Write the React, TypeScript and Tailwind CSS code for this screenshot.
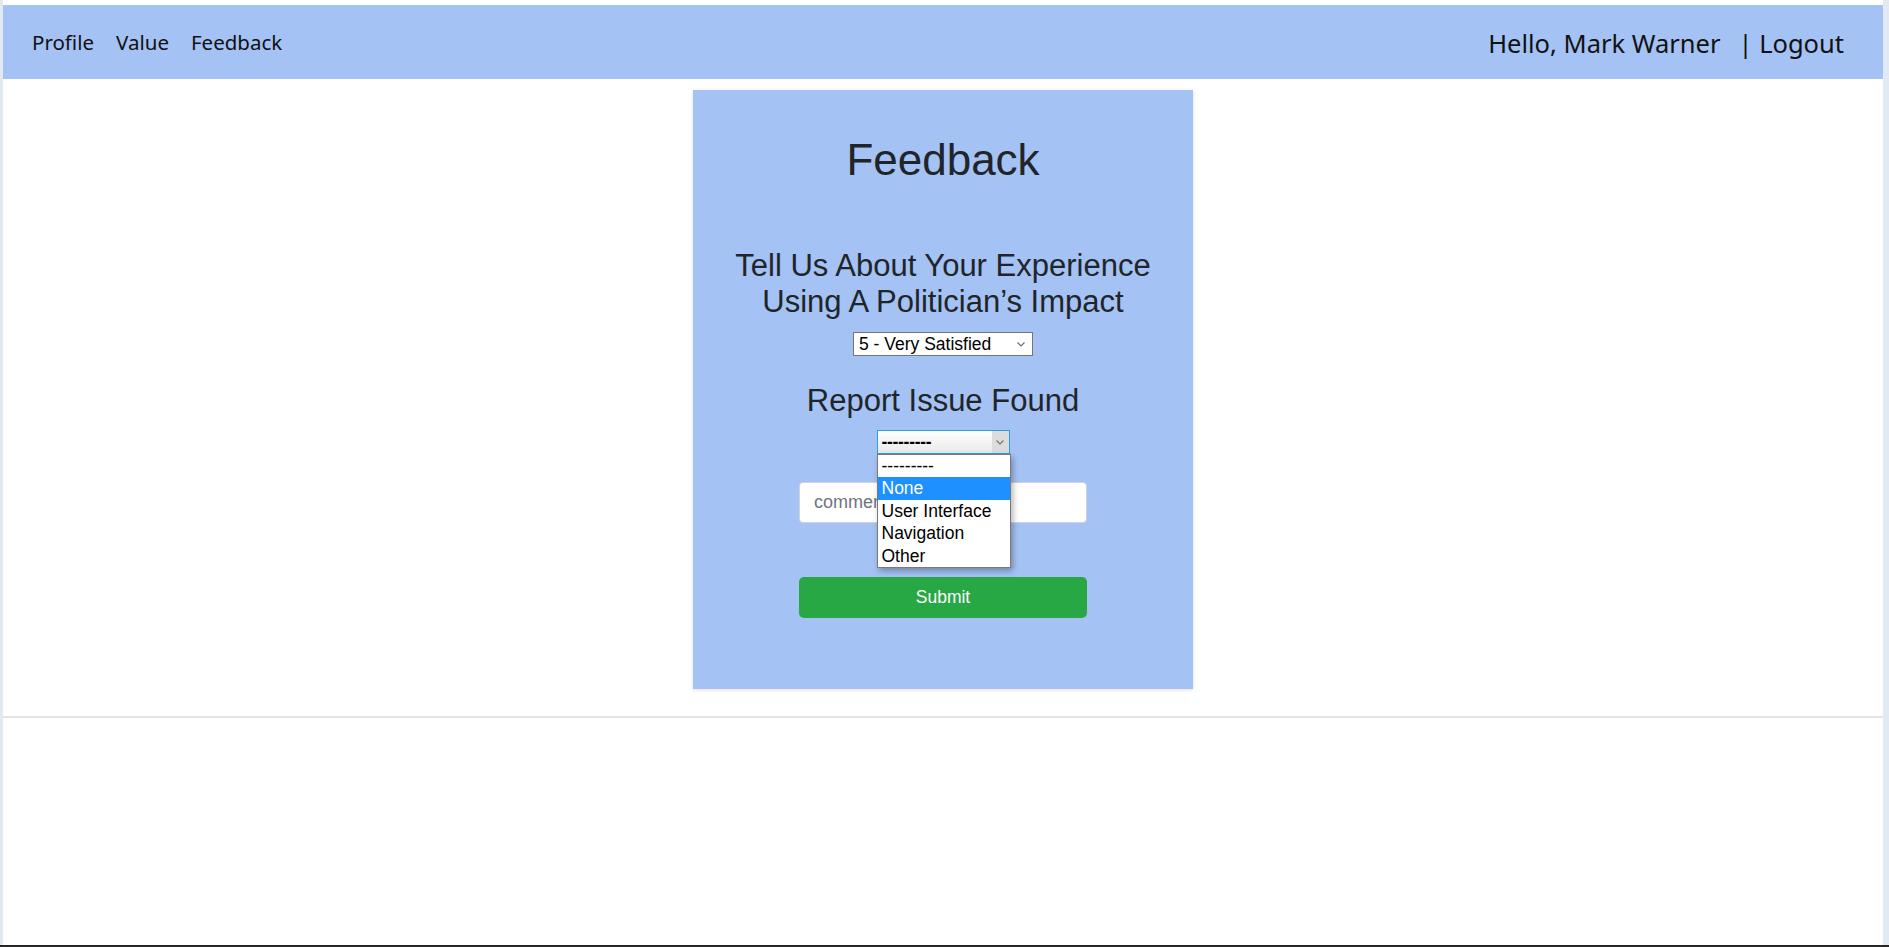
import React from "react";

function Chevron({ className }: { className?: string }) {
  return (
    <svg className={className} width="8" height="5" viewBox="0 0 8 5" fill="none">
      <path d="M0.5 0.5L4 4L7.5 0.5" stroke="currentColor" strokeWidth="1.1" />
    </svg>
  );
}

function Navbar() {
  return (
    <nav className="flex h-[74px] items-center justify-between bg-[#a4c2f4] pl-[29px] pr-[39px] font-['Noto_Sans',sans-serif] text-[#111]">
      <div className="flex items-center gap-[22px] text-[20.5px]">
        <a href="#">Profile</a>
        <a href="#">Value</a>
        <a href="#">Feedback</a>
      </div>
      <div className="flex items-center pt-[3px] text-[25.5px]">
        <span>Hello, Mark Warner</span>
        <a href="#" className="ml-[18px]">
          | Logout
        </a>
      </div>
    </nav>
  );
}

const issueOptions = ["---------", "None", "User Interface", "Navigation", "Other"];

function IssueSelect() {
  return (
    <div className="relative z-10 mt-[11px]">
      <div className="flex h-[24px] w-[133px] items-stretch border border-[#2f9ed9] bg-gradient-to-b from-white to-[#e9e9e9] text-[17.5px] leading-none text-black">
        <span className="flex flex-1 items-center pl-[4px] pt-[1px] font-semibold tracking-[-0.3px]">---------</span>
        <span className="flex w-[17px] items-center justify-center bg-[#dcdcdc] text-[#6f6f6f]">
          <Chevron />
        </span>
      </div>
      <ul className="absolute left-0 top-full w-[134px] border border-[#7a7a7a] bg-white text-[17.5px] text-black shadow-[2px_3px_6px_rgba(0,0,0,0.3)]">
        {issueOptions.map((opt) => (
          <li
            key={opt}
            className={
              opt === "None"
                ? "bg-[#1e90ff] pl-[4px] leading-[22.4px] text-white"
                : "pl-[4px] leading-[22.4px]"
            }
          >
            {opt}
          </li>
        ))}
      </ul>
    </div>
  );
}

function FeedbackCard() {
  return (
    <div className="flex h-[599px] w-[500px] flex-col items-center bg-[#a4c2f4] pt-[45px] text-[#212529] shadow-[0_1px_4px_rgba(0,0,0,0.12)]">
      <h1 className="text-[44px] leading-[50px]">Feedback</h1>
      <h3 className="mt-[63px] text-center text-[31px] leading-[36px]">
        Tell Us About Your Experience
        <br />
        Using A Politician’s Impact
      </h3>
      <div className="mt-[12px] flex h-[24px] w-[180px] items-center justify-between border border-[#767676] bg-white pl-[5px] pr-[7px] pt-[1px] text-[17.5px] leading-none text-black">
        <span>5 - Very Satisfied</span>
        <Chevron className="text-[#6b6b6b]" />
      </div>
      <h3 className="mt-[27px] text-[31px] leading-[36px]">Report Issue Found</h3>
      <IssueSelect />
      <input
        placeholder="comments"
        className="mt-[28px] h-[41px] w-[288px] rounded-[4px] border border-[#ced4da] bg-white px-[14px] text-[18px] text-[#495057] outline-none placeholder:text-[#6c757d]"
      />
      <button className="mt-[54px] h-[41px] w-[288px] rounded-[5px] bg-[#28a745] text-[17.5px] text-white">
        Submit
      </button>
    </div>
  );
}

export default function App() {
  return (
    <div className="flex h-[947px] w-full flex-col bg-[#e1e9f3] font-['Liberation_Sans',Arial,sans-serif]">
      <div className="flex flex-1 flex-col pl-[3px] pr-[6px]">
        <div className="flex flex-1 flex-col bg-white pt-[5px]">
          <Navbar />
          <main className="flex justify-center pt-[11px]">
            <FeedbackCard />
          </main>
          <div className="mt-[27px] h-[2px] bg-[#e3e3e3]" />
        </div>
      </div>
      <div className="h-[2px] bg-[#262626]" />
    </div>
  );
}
